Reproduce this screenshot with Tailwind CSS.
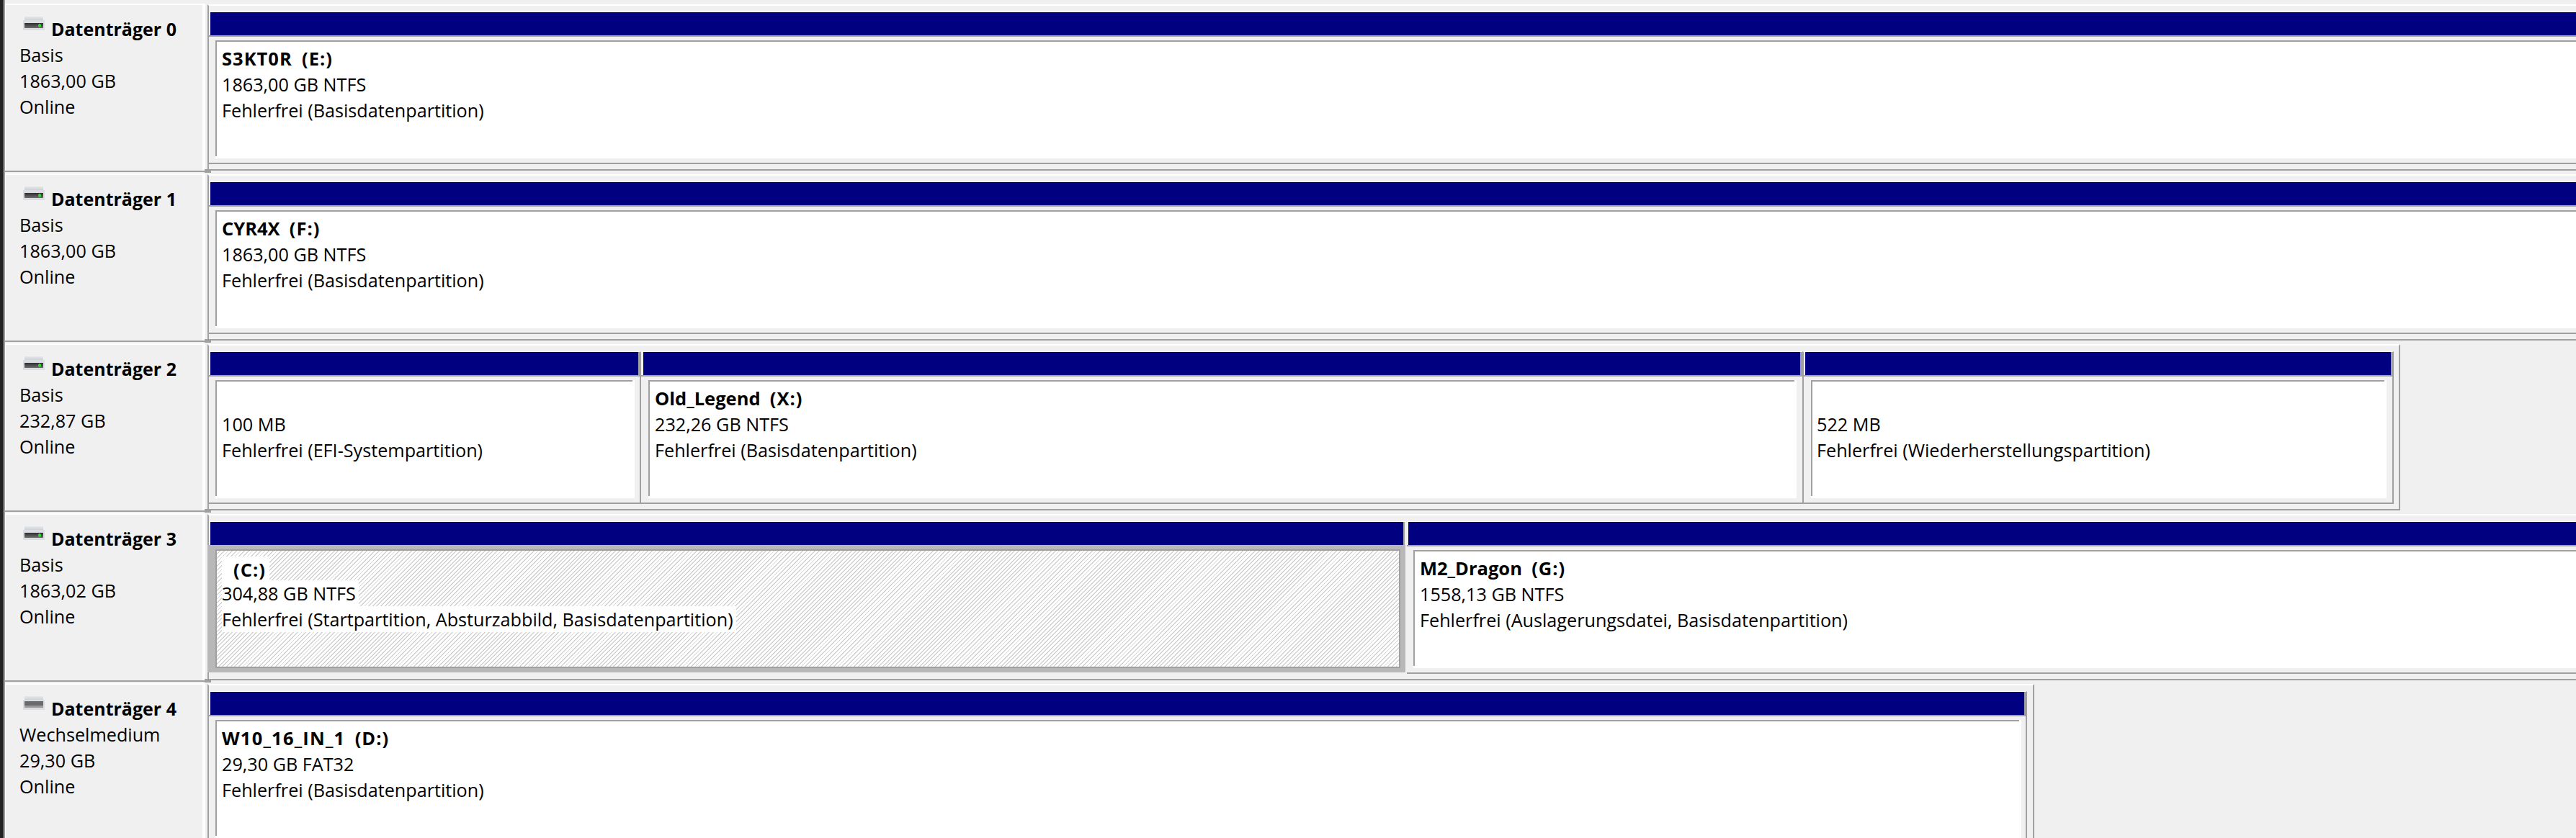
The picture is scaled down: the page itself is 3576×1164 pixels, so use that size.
<!DOCTYPE html>
<html lang="de">
<head>
  <meta charset="UTF-8" />
  <title>Datenträgerverwaltung</title>
  <script src="https://cdn.jsdelivr.net/npm/@tailwindcss/browser@4"></script>
</head>
<body class="h-[1164px] overflow-hidden bg-[#f0f0f0] font-['Open_Sans',sans-serif] text-[25.2px] leading-[36px] text-black">
  <svg width="0" height="0" class="absolute">
    <defs>
      <linearGradient id="band" x1="0" y1="0" x2="0" y2="1"><stop offset="0" stop-color="#2e2e2e"/><stop offset="1" stop-color="#6e6e6e"/></linearGradient>
      <linearGradient id="cap" x1="0" y1="0" x2="0" y2="1"><stop offset="0" stop-color="#e6e8ea"/><stop offset="1" stop-color="#c9cdd2"/></linearGradient>
    </defs>
  </svg>

  <div class="flex h-[1164px]">
    <div class="w-[7px] shrink-0 bg-[linear-gradient(90deg,#222_0,#222_4px,#666_4px,#666_6px,#aaa_6px)]"></div>

    <!-- Laufwerksliste -->
    <div class="w-[281px] shrink-0 pt-[3px]">
      <div class="relative h-[236px] mr-[3px] pt-[2px] border-b-2 border-[#a0a0a0]">
        <div class="absolute bottom-[-3px] right-[-8px] w-[9px] h-[5px] bg-[#a0a0a0]"></div>
        <div class="h-full pt-[15px] pl-[19px] border-t-2 border-l border-r-4 border-white">
          <div class="flex items-start font-bold text-[25px]">
            <svg class="ml-[5px] mr-[9px] mt-[1px]" width="30" height="19" viewBox="0 0 30 19"><rect x="2" y="0" width="26" height="6" fill="url(#cap)"/><rect x="0" y="5" width="30" height="14" fill="#dadde1"/><rect x="2" y="9" width="26" height="7" fill="url(#band)"/><rect x="21" y="11" width="4" height="3" fill="#35d435"/><rect x="22" y="10" width="2" height="5" fill="#35d435"/></svg>
            <span>Datenträger 0</span>
          </div>
          <div>Basis</div><div>1863,00 GB</div><div>Online</div>
        </div>
      </div>
      <div class="relative h-[236px] mr-[3px] pt-[2px] border-b-2 border-[#a0a0a0]">
        <div class="absolute bottom-[-3px] right-[-8px] w-[9px] h-[5px] bg-[#a0a0a0]"></div>
        <div class="h-full pt-[15px] pl-[19px] border-t-2 border-l border-r-4 border-white">
          <div class="flex items-start font-bold text-[25px]">
            <svg class="ml-[5px] mr-[9px] mt-[1px]" width="30" height="19" viewBox="0 0 30 19"><rect x="2" y="0" width="26" height="6" fill="url(#cap)"/><rect x="0" y="5" width="30" height="14" fill="#dadde1"/><rect x="2" y="9" width="26" height="7" fill="url(#band)"/><rect x="21" y="11" width="4" height="3" fill="#35d435"/><rect x="22" y="10" width="2" height="5" fill="#35d435"/></svg>
            <span>Datenträger 1</span>
          </div>
          <div>Basis</div><div>1863,00 GB</div><div>Online</div>
        </div>
      </div>
      <div class="relative h-[236px] mr-[3px] pt-[2px] border-b-2 border-[#a0a0a0]">
        <div class="absolute bottom-[-3px] right-[-8px] w-[9px] h-[5px] bg-[#a0a0a0]"></div>
        <div class="h-full pt-[15px] pl-[19px] border-t-2 border-l border-r-4 border-white">
          <div class="flex items-start font-bold text-[25px]">
            <svg class="ml-[5px] mr-[9px] mt-[1px]" width="30" height="19" viewBox="0 0 30 19"><rect x="2" y="0" width="26" height="6" fill="url(#cap)"/><rect x="0" y="5" width="30" height="14" fill="#dadde1"/><rect x="2" y="9" width="26" height="7" fill="url(#band)"/><rect x="21" y="11" width="4" height="3" fill="#35d435"/><rect x="22" y="10" width="2" height="5" fill="#35d435"/></svg>
            <span>Datenträger 2</span>
          </div>
          <div>Basis</div><div>232,87 GB</div><div>Online</div>
        </div>
      </div>
      <div class="relative h-[236px] mr-[3px] pt-[2px] border-b-2 border-[#a0a0a0]">
        <div class="absolute bottom-[-3px] right-[-8px] w-[9px] h-[5px] bg-[#a0a0a0]"></div>
        <div class="h-full pt-[15px] pl-[19px] border-t-2 border-l border-r-4 border-white">
          <div class="flex items-start font-bold text-[25px]">
            <svg class="ml-[5px] mr-[9px] mt-[1px]" width="30" height="19" viewBox="0 0 30 19"><rect x="2" y="0" width="26" height="6" fill="url(#cap)"/><rect x="0" y="5" width="30" height="14" fill="#dadde1"/><rect x="2" y="9" width="26" height="7" fill="url(#band)"/><rect x="21" y="11" width="4" height="3" fill="#35d435"/><rect x="22" y="10" width="2" height="5" fill="#35d435"/></svg>
            <span>Datenträger 3</span>
          </div>
          <div>Basis</div><div>1863,02 GB</div><div>Online</div>
        </div>
      </div>
      <div class="relative h-[236px] mr-[3px] pt-[2px]">
        <div class="h-full pt-[15px] pl-[19px] border-t-2 border-l border-r-4 border-white">
          <div class="flex items-start font-bold text-[25px]">
            <svg class="ml-[5px] mr-[9px] mt-[1px]" width="30" height="19" viewBox="0 0 30 19"><rect x="2" y="0" width="26" height="6" fill="url(#cap)"/><rect x="0" y="5" width="30" height="14" fill="#dadde1"/><rect x="2" y="7" width="26" height="9" fill="#6a6a6a"/><rect x="2" y="13" width="26" height="3" fill="#9a9a9a"/></svg>
            <span>Datenträger 4</span>
          </div>
          <div>Wechselmedium</div><div>29,30 GB</div><div>Online</div>
        </div>
      </div>
    </div>

    <!-- Partitionen -->
    <div class="flex-1 min-w-0 overflow-hidden pt-[1px]">

      <div class="h-[236px] w-[3500px] pt-[5px]">
        <div class="h-[231px] pt-[8px] border-t-2 border-l-2 border-b-2 border-[#a0a0a0] border-t-white">
          <div class="w-full h-[212px] flex flex-col border-t border-t-white border-b-2 border-[#a0a0a0]">
            <div class="h-[34px] pl-[2px] border-b-2 border-[#a0a0a0]"><div class="h-[32px] bg-[#000080]"></div></div>
            <div class="pt-[5px] pl-[9px]">
              <div class="h-[164px] bg-white pr-[3px] pb-[3px]">
                <div class="h-full pt-[5px] pl-[7px] border-t-2 border-l-2 border-[#a0a0a0]"><div class="font-bold text-[25.5px]"><span class="tracking-[1px]">S3KT0R</span>&nbsp;&nbsp;<span class="tracking-[1px]">(E:)</span></div><div>1863,00 GB NTFS</div><div>Fehlerfrei (Basisdatenpartition)</div></div>
              </div>
            </div>
          </div>
        </div>
      </div>

      <div class="h-[236px] w-[3500px] pt-[5px]">
        <div class="h-[231px] pt-[8px] border-t-2 border-l-2 border-b-2 border-[#a0a0a0] border-t-white">
          <div class="w-full h-[212px] flex flex-col border-t border-t-white border-b-2 border-[#a0a0a0]">
            <div class="h-[34px] pl-[2px] border-b-2 border-[#a0a0a0]"><div class="h-[32px] bg-[#000080]"></div></div>
            <div class="pt-[5px] pl-[9px]">
              <div class="h-[164px] bg-white pr-[3px] pb-[3px]">
                <div class="h-full pt-[5px] pl-[7px] border-t-2 border-l-2 border-[#a0a0a0]"><div class="font-bold text-[25.5px]">CYR4X&nbsp;&nbsp;<span class="tracking-[1px]">(F:)</span></div><div>1863,00 GB NTFS</div><div>Fehlerfrei (Basisdatenpartition)</div></div>
              </div>
            </div>
          </div>
        </div>
      </div>

      <div class="h-[236px] w-[3044px] pt-[5px]">
        <div class="h-[231px] pt-[8px] flex border-t-2 border-l-2 border-r-2 border-b-2 border-[#a0a0a0] border-t-white">
          <div class="w-[598px] h-[212px] shrink-0 border-t border-t-white border-b-2 border-[#a0a0a0]">
            <div class="h-[34px] pl-[2px] border-b-2 border-[#a0a0a0]"><div class="h-[32px] bg-[#000080] border-r-2 border-[#a0a0a0]"></div></div>
            <div class="pt-[5px] pl-[9px] pr-[7px]">
              <div class="h-[164px] bg-white pr-[3px] pb-[3px]">
                <div class="h-full pt-[5px] pl-[7px] border-t-2 border-l-2 border-[#a0a0a0]"><div>&nbsp;</div><div>100 MB</div><div>Fehlerfrei (EFI-Systempartition)</div></div>
              </div>
            </div>
          </div>
          <div class="w-[1614px] h-[212px] shrink-0 border-l-2 border-t border-t-white border-b-2 border-[#a0a0a0]">
            <div class="h-[34px] pl-[3px] border-b-2 border-[#a0a0a0]"><div class="h-[32px] bg-[#000080] border-r-[3px] border-[#a0a0a0]"></div></div>
            <div class="pt-[5px] pl-[10px] pr-[8px]">
              <div class="h-[164px] bg-white pr-[3px] pb-[3px]">
                <div class="h-full pt-[5px] pl-[7px] border-t-2 border-l-2 border-[#a0a0a0]"><div class="font-bold text-[25.5px]">Old_Legend&nbsp;&nbsp;<span class="tracking-[1px]">(X:)</span></div><div>232,26 GB NTFS</div><div>Fehlerfrei (Basisdatenpartition)</div></div>
              </div>
            </div>
          </div>
          <div class="w-[821px] h-[212px] shrink-0 border-l-2 border-r-2 border-t border-t-white border-b-2 border-[#a0a0a0]">
            <div class="h-[34px] pl-[2px] border-b-2 border-[#a0a0a0]"><div class="h-[32px] bg-[#000080] border-r-2 border-[#a0a0a0]"></div></div>
            <div class="pt-[5px] pl-[10px] pr-[8px]">
              <div class="h-[164px] bg-white pr-[3px] pb-[3px]">
                <div class="h-full pt-[5px] pl-[6px] border-t-2 border-l-2 border-[#a0a0a0]"><div>&nbsp;</div><div>522 MB</div><div>Fehlerfrei (Wiederherstellungspartition)</div></div>
              </div>
            </div>
          </div>
        </div>
      </div>

      <div class="h-[236px] w-[3500px] pt-[5px]">
        <div class="h-[231px] pt-[8px] flex border-t-2 border-l-2 border-b-2 border-[#a0a0a0] border-t-white">
          <div class="w-[1661px] h-[210px] shrink-0 border-t border-t-white">
            <div class="h-[32px] pl-[2px]"><div class="h-[32px] bg-[#000080] border-r-2 border-[#a0a0a0] mr-[1px]"></div></div>
            <div class="h-[177px] -ml-[2px] pl-[11px] pr-[7px] pt-[6px] pb-[6px] bg-[#b8b8b8]">
              <div class="h-full pt-[8px] pl-[7px] border-2 border-[#a0a0a0] bg-[repeating-linear-gradient(135deg,#fff_0,#fff_2.7px,#d4d4d4_2.7px,#d4d4d4_4px)]">
                <div class="w-[66px] h-[33px] pl-[16px] font-bold text-[25.5px] tracking-[1px] bg-white">(C:)</div>
                <div class="w-fit h-[36px] pr-[4px] bg-white">304,88 GB NTFS</div>
                <div class="w-fit h-[36px] pr-[4px] bg-white">Fehlerfrei (Startpartition, Absturzabbild, Basisdatenpartition)</div>
              </div>
            </div>
          </div>
          <div class="flex-1 h-[212px] ml-[2px] border-t border-t-white border-b-2 border-[#a0a0a0]">
            <div class="h-[34px] pl-[2px] border-b-2 border-[#a0a0a0]"><div class="h-[32px] bg-[#000080]"></div></div>
            <div class="pt-[5px] pl-[9px]">
              <div class="h-[164px] bg-white pr-[3px] pb-[3px]">
                <div class="h-full pt-[5px] pl-[7px] border-t-2 border-l-2 border-[#a0a0a0]"><div class="font-bold text-[25.5px]">M2_Dragon&nbsp;&nbsp;<span class="tracking-[1px]">(G:)</span></div><div>1558,13 GB NTFS</div><div>Fehlerfrei (Auslagerungsdatei, Basisdatenpartition)</div></div>
              </div>
            </div>
          </div>
        </div>
      </div>

      <div class="h-[236px] w-[2536px] pt-[5px]">
        <div class="h-[231px] pt-[8px] border-t-2 border-l-2 border-r-2 border-b-2 border-[#a0a0a0] border-t-white">
          <div class="w-[2524px] h-[212px] border-t border-t-white border-r-2 border-b-2 border-[#a0a0a0]">
            <div class="h-[34px] pl-[2px] border-b-2 border-[#a0a0a0]"><div class="h-[32px] bg-[#000080] border-r-2 border-[#a0a0a0]"></div></div>
            <div class="pt-[5px] pl-[9px] pr-[6px]">
              <div class="h-[164px] bg-white pr-[3px] pb-[3px]">
                <div class="h-full pt-[5px] pl-[7px] border-t-2 border-l-2 border-[#a0a0a0]"><div class="font-bold text-[25.5px]"><span class="tracking-[1.2px]">W10_16_IN_1</span>&nbsp;&nbsp;<span class="tracking-[1px]">(D:)</span></div><div>29,30 GB FAT32</div><div>Fehlerfrei (Basisdatenpartition)</div></div>
              </div>
            </div>
          </div>
        </div>
      </div>

    </div>
  </div>
</body>
</html>
